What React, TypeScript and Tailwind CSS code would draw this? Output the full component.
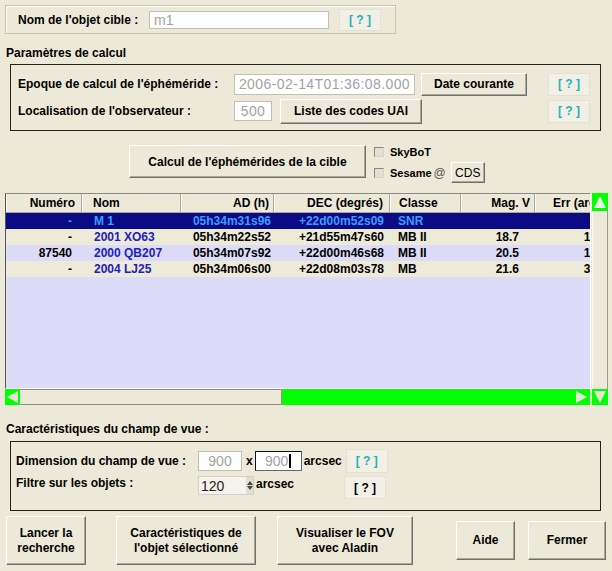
import React from 'react';

const btn =
  'bg-[#ece9d8] border border-t-white border-l-white border-r-[#6f6f6f] border-b-[#6f6f6f] shadow-[inset_-1px_-1px_0_#aca899] flex items-center justify-center text-center';
const field = 'bg-white border border-[#c2bfb2] font-normal text-[14px] tracking-[0.4px] text-[#a3a3a3] flex items-center';

const Help: React.FC<{ className?: string; dark?: boolean }> = ({ className = '', dark }) => (
  <div
    className={`bg-[#f1efe6] border border-[#e3e0d2] flex items-center justify-center ${dark ? 'text-black' : 'text-[#1fb3b3]'} ${className}`}
  >
    [ ? ]
  </div>
);

const Check: React.FC = () => (
  <span className="w-[10px] h-[10px] border border-t-[#8a887e] border-l-[#8a887e] border-r-[#d6d3c6] border-b-[#d6d3c6] bg-[#e2e0d6]" />
);

type Row = { num: string; nom: string; ad: string; dec: string; cls: string; mag: string; err: string };

const rows: Row[] = [
  { num: '-', nom: 'M 1', ad: '05h34m31s96', dec: '+22d00m52s09', cls: 'SNR', mag: '', err: '' },
  { num: '-', nom: '2001 XO63', ad: '05h34m22s52', dec: '+21d55m47s60', cls: 'MB II', mag: '18.7', err: '1.40' },
  { num: '87540', nom: '2000 QB207', ad: '05h34m07s92', dec: '+22d00m46s68', cls: 'MB II', mag: '20.5', err: '1.85' },
  { num: '-', nom: '2004 LJ25', ad: '05h34m06s00', dec: '+22d08m03s78', cls: 'MB', mag: '21.6', err: '37.1' },
];

const headCell = 'h-full border-l border-l-white border-r border-r-[#aca899] flex items-center shrink-0';

const App: React.FC = () => {
  return (
    <div className="w-[612px] h-[571px] bg-[#ece9d8] overflow-hidden text-[12px] leading-[14px] font-bold text-black font-['Liberation_Sans',Arial,sans-serif]">
      {/* Nom de l'objet */}
      <div className="pt-[5px] pl-[5px]">
        <div className="w-[391px] h-[29px] border border-[#c6c3b4] shadow-[inset_1px_1px_0_#ffffff] flex items-center pl-[12px]">
          <span className="w-[131px]">Nom de l'objet cible :</span>
          <div className={`${field} w-[180px] h-[18px] pl-[4px] tracking-normal`}>m1</div>
          <Help className="ml-[10px] w-[42px] h-[22px]" />
        </div>
      </div>

      <div className="mt-[12px] pl-[6px] h-[14px]">Paramètres de calcul</div>

      {/* Paramètres */}
      <div className="mt-[4px] ml-[10px] w-[591px] h-[67px] border border-[#222] pt-[7px] pl-[7px]">
        <div className="flex items-center h-[24px]">
          <span className="w-[216px]">Epoque de calcul de l'éphéméride :</span>
          <div className={`${field} w-[181px] h-[21px] justify-end pr-[4px]`}>2006-02-14T01:36:08.000</div>
          <div className={`${btn} ml-[6px] w-[106px] h-[23px]`}>Date courante</div>
          <Help className="ml-[21px] w-[42px] h-[23px]" />
        </div>
        <div className="flex items-center h-[26px] mt-[2px]">
          <span className="w-[216px]">Localisation de l'observateur :</span>
          <div className={`${field} w-[38px] h-[20px] justify-center`}>500</div>
          <div className={`${btn} ml-[8px] w-[142px] h-[25px]`}>Liste des codes UAI</div>
          <Help className="ml-[126px] w-[42px] h-[23px]" />
        </div>
      </div>

      {/* Calcul */}
      <div className="mt-[14px] pl-[129px] flex items-start h-[38px]">
        <div className={`${btn} w-[237px] h-[33px]`}>Calcul de l'éphémérides de la cible</div>
        <div className="ml-[8px] flex flex-col">
          <div className="h-[14px] flex items-center gap-[6px]">
            <Check />
            <span className="text-[11px]">SkyBoT</span>
          </div>
          <div className="mt-[3px] h-[21px] flex items-center">
            <Check />
            <span className="ml-[6px] text-[11px]">Sesame</span>
            <span className="ml-[2px] font-normal text-[#555] text-[12px]">@</span>
            <div className={`${btn} ml-[5px] w-[34px] h-[21px] font-normal`}>CDS</div>
          </div>
        </div>
      </div>

      {/* Table */}
      <div className="mt-[10px] pl-[5px] flex">
        <div className="w-[587px] flex flex-col">
          <div className="w-[586px] h-[196px] border border-t-[#8a8a8a] border-l-[#555] border-r-white border-b-white overflow-hidden bg-[#dddcf8]">
            <div className="h-[19px] flex bg-[#ece9d8] border-b border-b-[#aca899] whitespace-nowrap">
              <div className={`${headCell} w-[76px] justify-end pr-[6px]`}>Numéro</div>
              <div className={`${headCell} w-[99px] pl-[10px]`}>Nom</div>
              <div className={`${headCell} w-[93px] justify-end pr-[4px]`}>AD (h)</div>
              <div className={`${headCell} w-[116px] justify-end pr-[6px]`}>DEC (degrés)</div>
              <div className={`${headCell} w-[71px] pl-[8px]`}>Classe</div>
              <div className={`${headCell} w-[74px] justify-end pr-[4px]`}>Mag. V</div>
              <div className={`${headCell} w-[80px] pl-[17px]`}>Err (arcsec)</div>
            </div>
            {rows.map((r, i) => {
              const sel = i === 0;
              const bg = sel ? 'bg-[#0b0b86]' : i % 2 === 1 ? 'bg-[#eeead8]' : 'bg-[#dddcf8]';
              const txt = sel ? 'text-[#3d9bff]' : 'text-black';
              return (
                <div key={i} className={`h-[16px] flex items-center whitespace-nowrap ${bg} ${txt}`}>
                  <div className="w-[76px] shrink-0 text-right pr-[10px]">{r.num}</div>
                  <div className={`w-[99px] shrink-0 pl-[12px] ${sel ? '' : 'text-[#2020c0]'}`}>{r.nom}</div>
                  <div className="w-[93px] shrink-0 text-right pr-[3px]">{r.ad}</div>
                  <div className="w-[116px] shrink-0 text-right pr-[6px]">{r.dec}</div>
                  <div className="w-[71px] shrink-0 pl-[8px]">{r.cls}</div>
                  <div className="w-[74px] shrink-0 text-right pr-[16px]">{r.mag}</div>
                  <div className="w-[80px] shrink-0 text-right pr-[8px]">{r.err}</div>
                </div>
              );
            })}
          </div>
          {/* horizontal scrollbar */}
          <div className="h-[16px] flex">
            <div className="w-[15px] h-full bg-[#00ff00] flex items-center justify-center">
              <svg width="13" height="14" viewBox="0 0 13 14">
                <polygon points="1,7 12,1 12,13" fill="#e6e4d6" />
              </svg>
            </div>
            <div className="w-[262px] h-full bg-[#ece9d8] border-t border-b border-[#8f8d84] border-r-[#8f8d84] border-r" />
            <div className="w-[291px] h-full bg-[#00ff00]" />
            <div className="w-[17px] h-full bg-[#00ff00] flex items-center justify-center">
              <svg width="13" height="14" viewBox="0 0 13 14">
                <polygon points="12,7 1,1 1,13" fill="#e6e4d6" />
              </svg>
            </div>
          </div>
        </div>
        {/* vertical scrollbar */}
        <div className="w-[16px] h-[212px] flex flex-col">
          <div className="h-[18px] bg-[#00ff00] flex items-center justify-center">
            <svg width="14" height="14" viewBox="0 0 14 14">
              <polygon points="7,1 13,13 1,13" fill="#e8f4e4" />
            </svg>
          </div>
          <div className="flex-1 bg-[#ece9d8] border-l border-r border-l-[#f8f7f0] border-r-[#9a988e]" />
          <div className="h-[16px] bg-[#00ff00] flex items-center justify-center">
            <svg width="14" height="14" viewBox="0 0 14 14">
              <polygon points="7,13 13,1 1,1" fill="#e6e4d6" />
            </svg>
          </div>
        </div>
      </div>

      <div className="mt-[17px] pl-[6px] h-[14px]">Caractéristiques du champ de vue :</div>

      {/* Champ de vue */}
      <div className="mt-[5px] ml-[10px] w-[591px] h-[70px] border border-[#222] pt-[7px] pl-[5px]">
        <div className="flex items-center h-[24px]">
          <span className="w-[182px]">Dimension du champ de vue :</span>
          <div className={`${field} w-[44px] h-[20px] justify-center tracking-normal`}>900</div>
          <span className="ml-[4px]">x</span>
          <div className="ml-[2px] w-[47px] h-[20px] bg-white border border-[#111] border-r-[#666] border-b-[#666] flex items-center justify-center font-normal text-[14px] text-[#a3a3a3]">
            900<span className="ml-[1px] w-[2px] h-[14px] bg-black" />
          </div>
          <span className="ml-[2px]">arcsec</span>
          <Help className="ml-[4px] w-[42px] h-[24px]" />
        </div>
        <div className="flex items-start h-[25px] mt-[1px]">
          <span className="w-[182px] mt-[2px]">Filtre sur les objets :</span>
          <div className="mt-[2px] w-[56px] h-[19px] bg-[#f4f3ee] border border-[#d3d0c3] flex items-center font-normal text-[14px] text-[#222]">
            <span className="pl-[2px] flex-1">120</span>
            <div className="w-[7px] h-full flex flex-col items-center justify-center gap-[1px] bg-[#e2dfd2]">
              <svg width="6" height="4" viewBox="0 0 6 4">
                <polygon points="3,0 6,4 0,4" fill="#444" />
              </svg>
              <svg width="6" height="4" viewBox="0 0 6 4">
                <polygon points="3,4 6,0 0,0" fill="#444" />
              </svg>
            </div>
          </div>
          <span className="ml-[2px] mt-[3px]">arcsec</span>
          <Help dark className="ml-[50px] mt-[2px] w-[42px] h-[23px]" />
        </div>
      </div>

      {/* Boutons */}
      <div className="mt-[5px] pl-[6px] flex items-center h-[49px] leading-[15px]">
        <div className={`${btn} w-[80px] h-[49px]`}>
          Lancer la
          <br />
          recherche
        </div>
        <div className={`${btn} ml-[30px] w-[140px] h-[49px]`}>
          Caractéristiques de
          <br />
          l'objet sélectionné
        </div>
        <div className={`${btn} ml-[21px] w-[136px] h-[49px]`}>
          Visualiser le FOV
          <br />
          avec Aladin
        </div>
        <div className={`${btn} ml-[43px] w-[59px] h-[39px]`}>Aide</div>
        <div className={`${btn} ml-[13px] w-[78px] h-[39px]`}>Fermer</div>
      </div>
    </div>
  );
};

export default App;
